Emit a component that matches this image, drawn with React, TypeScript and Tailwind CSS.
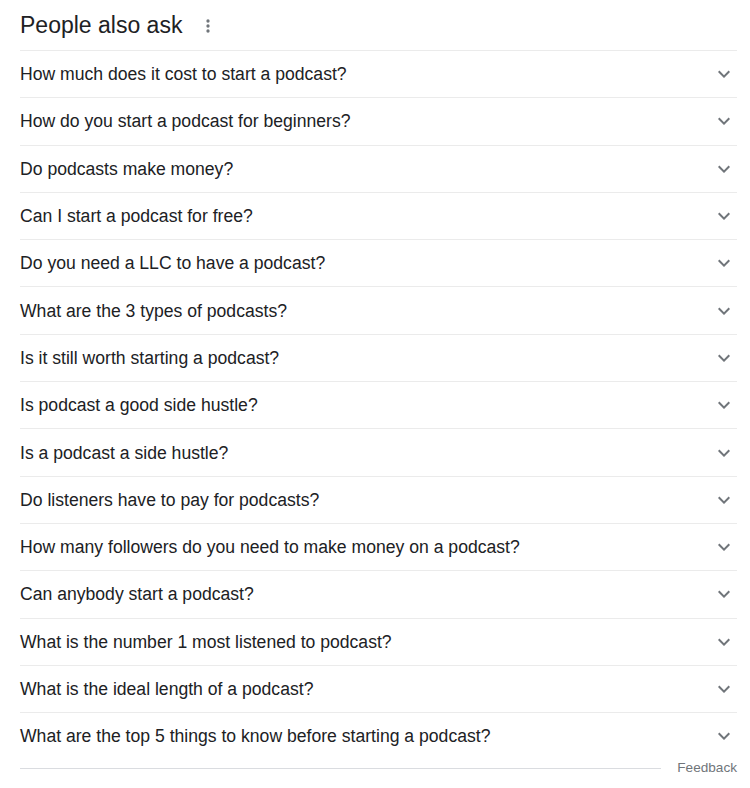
const questions = [
  'How much does it cost to start a podcast?',
  'How do you start a podcast for beginners?',
  'Do podcasts make money?',
  'Can I start a podcast for free?',
  'Do you need a LLC to have a podcast?',
  'What are the 3 types of podcasts?',
  'Is it still worth starting a podcast?',
  'Is podcast a good side hustle?',
  'Is a podcast a side hustle?',
  'Do listeners have to pay for podcasts?',
  'How many followers do you need to make money on a podcast?',
  'Can anybody start a podcast?',
  'What is the number 1 most listened to podcast?',
  'What is the ideal length of a podcast?',
  'What are the top 5 things to know before starting a podcast?',
];

function MoreIcon() {
  return (
    <svg width="20" height="20" viewBox="0 0 24 24" fill="#70757a">
      <circle cx="12" cy="6" r="2" />
      <circle cx="12" cy="12" r="2" />
      <circle cx="12" cy="18" r="2" />
    </svg>
  );
}

function Chevron() {
  return (
    <svg width="24" height="24" viewBox="0 0 24 24" fill="#70757a">
      <path d="M16.59 8.59L12 13.17 7.41 8.59 6 10l6 6 6-6z" />
    </svg>
  );
}

export default function App() {
  return (
    <div className="w-[750px] h-[788px] bg-white pl-[20px] pr-[13px] font-['Liberation_Sans',Arial,sans-serif] text-[#202124]">
      <div className="h-[50px] flex items-center">
        <h2 className="text-[23px] leading-[28px]">People also ask</h2>
        <div className="ml-[16px] mt-[1px]">
          <MoreIcon />
        </div>
      </div>

      <div>
        {questions.map((q) => (
          <div
            key={q}
            className="h-[47.3px] border-t border-[#ebebeb] flex items-center justify-between"
          >
            <span className="text-[17.6px] leading-[24px]">{q}</span>
            <div className="mr-[1px]">
              <Chevron />
            </div>
          </div>
        ))}
      </div>

      <div className="h-[18px] flex items-center">
        <div className="flex-1 border-t border-[#dadce0]" />
        <span className="ml-[16px] text-[13.6px] leading-[18px] text-[#70757a]">Feedback</span>
      </div>
    </div>
  );
}
